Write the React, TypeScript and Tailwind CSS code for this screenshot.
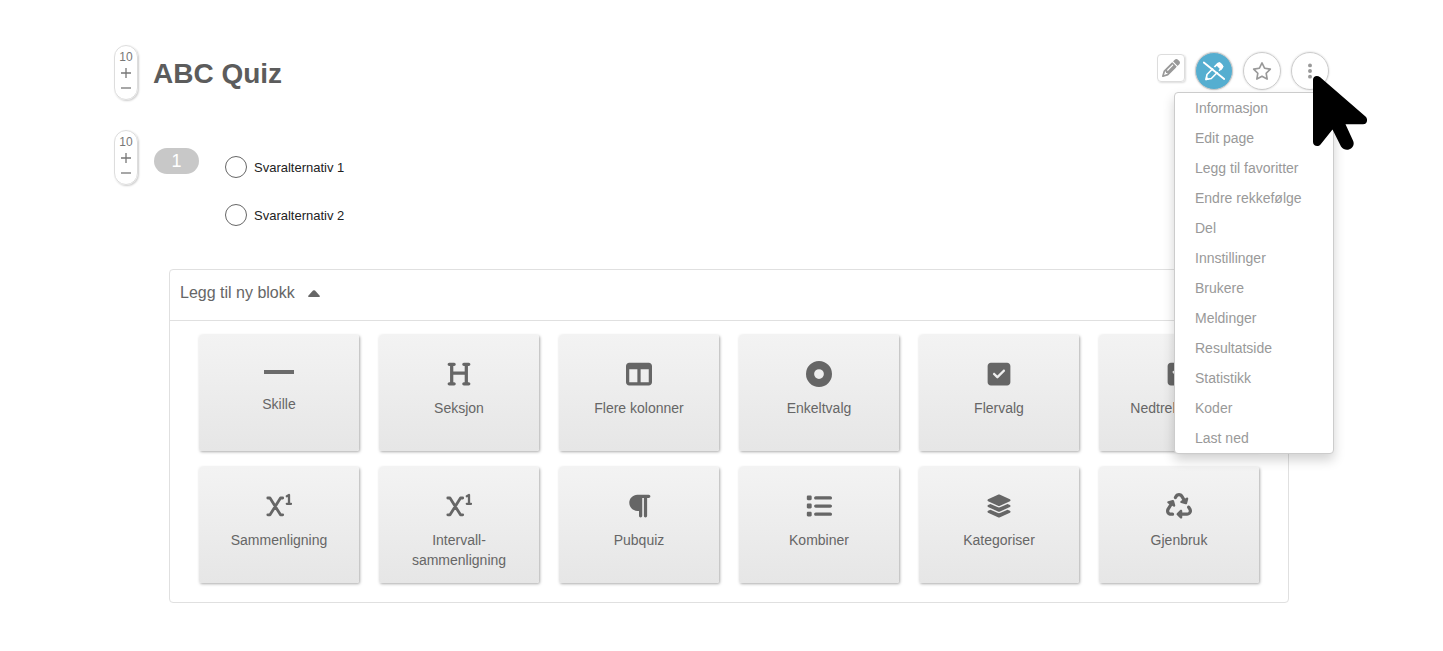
import type { ReactNode } from 'react'
import {
  FaCircleDot,
  FaEllipsisVertical,
  FaHeading,
  FaLayerGroup,
  FaList,
  FaParagraph,
  FaPencil,
  FaRecycle,
  FaRegStar,
  FaSquareCaretDown,
  FaSquareCheck,
  FaTableColumns,
} from 'react-icons/fa6'

const MENU_ITEMS = [
  'Informasjon',
  'Edit page',
  'Legg til favoritter',
  'Endre rekkefølge',
  'Del',
  'Innstillinger',
  'Brukere',
  'Meldinger',
  'Resultatside',
  'Statistikk',
  'Koder',
  'Last ned',
]

const BLOCKS: Array<{ label: string; icon?: ReactNode }> = [
  { label: 'Skille' },
  { label: 'Seksjon', icon: <FaHeading /> },
  { label: 'Flere kolonner', icon: <FaTableColumns /> },
  { label: 'Enkeltvalg', icon: <FaCircleDot /> },
  { label: 'Flervalg', icon: <FaSquareCheck /> },
  { label: 'Nedtrekksmeny', icon: <FaSquareCaretDown /> },
  { label: 'Sammenligning', icon: <PowerIcon /> },
  { label: 'Intervall- sammenligning', icon: <PowerIcon /> },
  { label: 'Pubquiz', icon: <FaParagraph /> },
  { label: 'Kombiner', icon: <FaList /> },
  { label: 'Kategoriser', icon: <FaLayerGroup /> },
  { label: 'Gjenbruk', icon: <FaRecycle /> },
]

const ANSWERS = ['Svaralternativ 1', 'Svaralternativ 2']

function PowerIcon() {
  return (
    <svg
      viewBox="0 0 26 26"
      className="size-[26px]"
      fill="none"
      stroke="currentColor"
      strokeWidth="2.800"
      strokeLinecap="round"
      strokeLinejoin="round"
    >
      <path d="M1.800 5H4L14.500 21.800H16.700M16.700 5H14.500L4 21.800H1.800" />
      <path d="M20.800 3.200L23 2V10.500M20.800 10.800H25" strokeWidth="2.300" />
    </svg>
  )
}

function PencilOffIcon() {
  return (
    <svg viewBox="0 0 22 20" className="h-5 w-[22px]" fill="none" stroke="#fff" strokeWidth="1.6">
      <path d="M3 18.500l1-5L14.800 2.600c.8-.8 1.800-.8 2.600 0l1.600 1.600c.8.8.8 1.800 0 2.600L8.300 17.500z" strokeLinejoin="round" />
      <path d="M14 4l4 4 1.500-2.200-3-3.500z" fill="#fff" />
      <path d="M3.500 16l2 2.200-2.700.6z" fill="#fff" strokeWidth="1" />
      <path d="M2.500.2l20 16" stroke="#55aed0" strokeWidth="2" />
      <path d="M.8 1.500l20.400 16.500" strokeWidth="1.900" strokeLinecap="round" />
    </svg>
  )
}

function PointerIcon() {
  return (
    <svg viewBox="0 0 56 76" className="h-[76px] w-14">
      <path d="M1 5C1 1 5-.4 8.200 2.200L53.500 41.500C56.500 44.500 55 49.300 51 49.300H33.500L41.200 66C44 73 34 78.500 29 71.500L20.500 54.500L8.500 69.500C6 72.500 1 71 1 67z" />
    </svg>
  )
}

function ScoreStepper({ label }: { label: string }) {
  return (
    <div
      role="group"
      aria-label={label}
      className="flex h-[55px] w-6 shrink-0 flex-col items-center rounded-full border border-[#ddd] pt-[3px] text-[#777] shadow-[1px_1px_2px_#ccc]"
    >
      <span className="text-xs leading-4">10</span>
      <button type="button" aria-label="Øk" className="flex h-4 items-center">
        <svg viewBox="0 0 10 10" className="size-[10px]" stroke="currentColor" strokeWidth="1.300">
          <path d="M0 5h10M5 0v10" />
        </svg>
      </button>
      <button type="button" aria-label="Reduser" className="flex h-[14px] items-center">
        <svg viewBox="0 0 10 10" className="size-[10px]" stroke="currentColor" strokeWidth="1.300">
          <path d="M0 5h10" />
        </svg>
      </button>
    </div>
  )
}

function BlockButton({ label, icon }: { label: string; icon?: ReactNode }) {
  return (
    <button
      type="button"
      className="flex h-[116px] flex-col items-center rounded-xs bg-linear-to-b from-[#f3f3f3] to-[#e6e6e6] px-6 pt-[26px] shadow-[1px_1px_3px_#aaa]"
    >
      {icon ? (
        <span className="text-[26px] leading-none">{icon}</span>
      ) : (
        <span className="flex h-[22px] items-center">
          <span className="h-1 w-[30px] bg-[#6b6b6b]" />
        </span>
      )}
      <span className="mt-[11px] text-sm leading-5">{label}</span>
    </button>
  )
}

function Toolbar() {
  const round = 'flex size-[38px] items-center justify-center rounded-full'
  return (
    <div className="mt-[7px] flex shrink-0 items-start gap-[10px] text-[#999]">
      <button
        type="button"
        aria-label="Rediger"
        className="mt-[2px] flex size-[28px] items-center justify-center rounded-sm border border-[#ddd] text-lg shadow-[1px_1px_2px_#ddd]"
      >
        <FaPencil />
      </button>
      <button
        type="button"
        aria-label="Avslutt redigering"
        className={`${round} border border-[#ccc] bg-[#55aed0] shadow-[0_0_2px_#ccc]`}
      >
        <PencilOffIcon />
      </button>
      <button
        type="button"
        aria-label="Favoritt"
        className={`${round} border border-[#ccc] text-xl shadow-[0_0_2px_#ccc]`}
      >
        <FaRegStar />
      </button>
      <div className="relative">
        <button
          type="button"
          aria-label="Mer"
          className={`${round} border border-[#ccc] text-lg shadow-[0_0_2px_#ccc]`}
        >
          <FaEllipsisVertical />
        </button>
        <ul className="absolute top-[40px] -right-[5px] z-10 w-40 rounded-sm border border-[#ccc] bg-white text-sm shadow-[0_6px_12px_rgba(0,0,0,0.18)]">
          {MENU_ITEMS.map((item) => (
            <li key={item}>
              <a href="#" className="block px-5 leading-[30px]">
                {item}
              </a>
            </li>
          ))}
        </ul>
        <div className="pointer-events-none absolute top-[23px] left-[21px] z-20">
          <PointerIcon />
        </div>
      </div>
    </div>
  )
}

export default function App() {
  return (
    <main className="min-h-screen bg-white px-[114px] pt-[45px] pb-12 font-['Liberation_Sans',Arial,sans-serif] text-[#666]">
      <header className="flex items-start">
        <ScoreStepper label="Poeng for quiz" />
        <h1 className="ml-[15px] flex-1 text-[28px] leading-[58px] font-bold text-[#5c5c5c]">ABC Quiz</h1>
        <Toolbar />
      </header>

      <section className="mt-[27px] flex items-start">
        <ScoreStepper label="Poeng for spørsmål 1" />
        <span className="mt-[18px] ml-4 w-[45px] rounded-full bg-[#c8c8c8] text-center text-lg leading-[26px] text-white">
          1
        </span>
        <fieldset aria-label="Spørsmål 1" className="mt-[26px] ml-[26px] flex flex-col gap-[24px]">
          {ANSWERS.map((answer) => (
            <label key={answer} className="flex items-start gap-[7px] text-[13px] leading-6 text-[#222]">
              <input
                type="radio"
                name="answer"
                className="size-[22px] appearance-none rounded-full border border-[#666] checked:border-[6px]"
              />
              {answer}
            </label>
          ))}
        </fieldset>
      </section>

      <section className="mt-[41px] mr-10 ml-[55px] rounded-sm border border-[#e0e0e0]">
        <h2 className="border-b border-[#e0e0e0] text-base leading-[46px]">
          <button type="button" aria-expanded="true" className="flex items-center gap-[13px] pb-1 pl-[10px]">
            Legg til ny blokk
            <svg viewBox="0 0 12 8" className="h-2 w-3" fill="currentColor">
              <path d="M.8 8Q-.4 7.500.5 6.500L5 1.600Q6 .8 7 1.600L11.500 6.500Q12.400 7.500 11.200 8z" />
            </svg>
          </button>
        </h2>
        <div className="grid grid-cols-6 gap-x-5 gap-y-4 px-[29px] pt-[14px] pb-[19px]">
          {BLOCKS.map((block) => (
            <BlockButton key={block.label} {...block} />
          ))}
        </div>
      </section>
    </main>
  )
}
